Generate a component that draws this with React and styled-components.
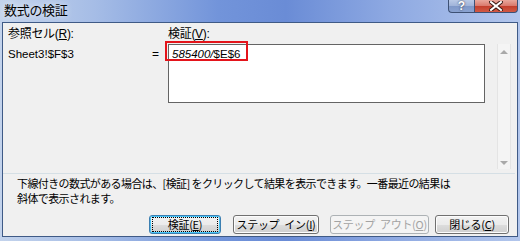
import React from 'react'
import styled, { createGlobalStyle } from 'styled-components'

const Global = createGlobalStyle`
  html, body { margin: 0; padding: 0; background: #9fb6e2; }
  body { font-family: "Liberation Sans", "Noto Sans CJK JP", sans-serif; font-size: 12px; color: #000; }
`

export default function App() {
  return (
    <Window>
      <Global />
      <TitleBar>
        <Title>数式の検証</Title>
        <CaptionButtons>
          <HelpButton>?</HelpButton>
          <CloseButton>
            <svg width="14" height="10" viewBox="0 0 14 10">
              <path d="M2 1 L12 9 M12 1 L2 9" stroke="#3a1a14" strokeWidth="4" strokeLinecap="square" />
              <path d="M2 1 L12 9 M12 1 L2 9" stroke="#fff" strokeWidth="2" strokeLinecap="square" />
            </svg>
          </CloseButton>
        </CaptionButtons>
      </TitleBar>
      <Client>
        <Top>
          <Label>参照セル(<U>R</U>):</Label>
          <span />
          <Label>検証(<U>V</U>):</Label>
          <span />
          <span />
          <CellRef>Sheet3!$F$3</CellRef>
          <Equals>=</Equals>
          <Formula>
            <Mark />
            <Italic>585400/</Italic><U>$E$6</U>
          </Formula>
          <span />
          <Scroll>
            <Arrow $up />
            <Arrow />
          </Scroll>
        </Top>
        <Separator />
        <Note>
          <div>下線付きの数式がある場合は、[検証] をクリックして結果を表示できます。一番最近の結果は</div>
          <div>斜体で表示されます。</div>
        </Note>
        <Buttons>
          <Button $w={72} $focus><Focus>検証(<U>E</U>)</Focus></Button>
          <Button $w={86} $ml={12}>ステップ<Gap />イン(<U>I</U>)</Button>
          <Button $w={99} $ml={11} disabled>ステップ<Gap />アウト(<U>O</U>)</Button>
          <Button $w={74} $ml={6}>閉じる(<U>C</U>)</Button>
        </Buttons>
      </Client>
    </Window>
  )
}

const Window = styled.div`
  width: 520px;
  height: 241px;
  display: flex;
  flex-direction: column;
  padding: 0 2px 4px 2px;
  box-sizing: border-box;
  background: linear-gradient(90deg, #c3d3ec 0%, #a6bde6 18%, #7294da 42%, #6a8cd6 55%, #8ea9e2 75%, #b2c6ec 100%);
`

const TitleBar = styled.div`
  height: 22px;
  display: flex;
  justify-content: space-between;
  align-items: flex-start;
`

const Title = styled.div`
  font-family: "Noto Sans CJK JP", sans-serif;
  font-size: 13px;
  line-height: 20px;
  padding-left: 2px;
  color: #000;
  letter-spacing: -0.3px;
  text-shadow: 0 0 6px rgba(255,255,255,0.9);
`

const CaptionButtons = styled.div`
  display: flex;
`

const CapBase = styled.div`
  height: 13px;
  border: 1px solid #3d5175;
  border-top: none;
  display: flex;
  align-items: center;
  justify-content: center;
  box-sizing: border-box;
`

const HelpButton = styled(CapBase)`
  width: 26px;
  border-radius: 0 0 0 4px;
  border-right: none;
  background: linear-gradient(#b9c9e6 0%, #9fb3d9 50%, #7f98c8 51%, #8aa3d2 100%);
  color: #fff;
  font-weight: bold;
  font-size: 12px;
  font-family: "Liberation Sans", sans-serif;
  text-shadow: 0 0 2px #223;
`

const CloseButton = styled(CapBase)`
  width: 44px;
  border-radius: 0 0 4px 0;
  background: linear-gradient(#e9a79c 0%, #d9786b 50%, #c33e2c 51%, #d15a45 100%);
`

const Client = styled.div`
  flex: 1;
  background: #f0f0f0;
  border: 1px solid #3f5a86;
  display: flex;
  flex-direction: column;
  padding: 3px 0 0 0;
`

const Top = styled.div`
  display: grid;
  grid-template-columns: 144px 16px 317px 12px 14px;
  grid-template-rows: 16px 125px;
  padding-left: 5px;
  row-gap: 2px;
`

const Label = styled.div`
  line-height: 16px;
  letter-spacing: -0.3px;
`

const U = styled.span`
  text-decoration: underline;
`

const CellRef = styled.div`
  line-height: 16px;
  padding-top: 2px;
  font-size: 11.5px;
`

const Equals = styled.div`
  line-height: 16px;
  padding-top: 2px;
`

const Formula = styled.div`
  position: relative;
  height: 59px;
  box-sizing: border-box;
  border: 1px solid #646464;
  background: #fff;
  padding: 1px 0 0 3px;
  line-height: 16px;
  font-size: 11.5px;
`

const Mark = styled.div`
  position: absolute;
  left: -4px;
  top: -4px;
  width: 83px;
  height: 20px;
  border: 2px solid #e4141b;
  box-sizing: border-box;
`

const Italic = styled.i``

const Scroll = styled.div`
  display: flex;
  flex-direction: column;
  justify-content: space-between;
  align-items: center;
  background: #f4f4f4;
  border-left: 1px solid #e4e4e4;
  border-right: 1px solid #e4e4e4;
  padding: 6px 0 4px;
`

const Arrow = styled.div`
  width: 0;
  height: 0;
  border-left: 4px solid transparent;
  border-right: 4px solid transparent;
  ${p => (p.$up ? 'border-bottom: 4px solid #a9a9a9;' : 'border-top: 4px solid #a9a9a9;')}
`

const Separator = styled.div`
  height: 0;
  margin: 4px 2px 0 0;
  border-top: 1px solid #d5dfe5;
`

const Note = styled.div`
  padding: 2px 0 0 14px;
  line-height: 15px;
  font-family: "Noto Sans CJK JP", sans-serif;
  font-size: 11px;
  letter-spacing: -0.6px;
  white-space: nowrap;
`

const Buttons = styled.div`
  display: flex;
  justify-content: flex-end;
  padding: 9px 8px 0 0;
`

const Gap = styled.span`
  display: inline-block;
  width: 5px;
`

const Button = styled.button`
  width: ${p => p.$w}px;
  height: 19px;
  margin-left: ${p => p.$ml || 0}px;
  padding: 0;
  box-sizing: border-box;
  border-radius: 3px;
  font-family: "Noto Sans CJK JP", sans-serif;
  font-size: 11px;
  letter-spacing: -0.3px;
  color: #000;
  border: 1px solid ${p => (p.$focus ? '#3c7fb1' : '#707070')};
  background: linear-gradient(#f2f2f2 0%, #ebebeb 50%, #dddddd 51%, #cfcfcf 100%);
  box-shadow: inset 0 0 0 1px ${p => (p.$focus ? '#48c6f8' : '#fcfcfc')};
  display: flex;
  align-items: center;
  justify-content: center;
  line-height: 15px;
  white-space: nowrap;
  &:disabled {
    border-color: #adb2b5;
    background: #f4f4f4;
    box-shadow: none;
    color: #a3a3a3;
  }
`

const Focus = styled.span`
  display: flex;
  align-items: center;
  justify-content: center;
  width: calc(100% - 6px);
  height: 13px;
  border: 1px dotted #000;
`
